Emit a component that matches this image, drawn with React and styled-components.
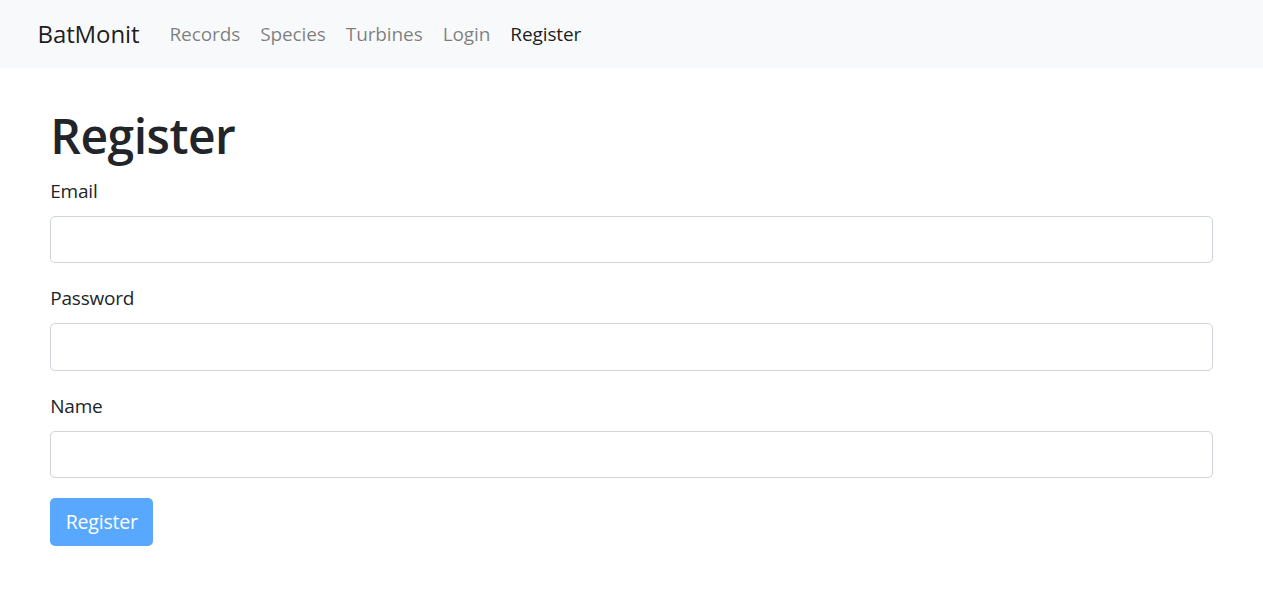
import React from "react";
import styled, { createGlobalStyle } from "styled-components";

const GlobalStyle = createGlobalStyle`
  * { box-sizing: border-box; }
  body {
    margin: 0;
    background: #ffffff;
    color: #212529;
    font-family: "Open Sans", "Noto Sans", sans-serif;
  }
`;

const NavBar = styled.nav`
  height: 68px;
  background: #f8f9fa;
  display: flex;
  align-items: center;
`;

const NavInner = styled.div`
  width: 100%;
  max-width: 1200px;
  margin: 0 auto;
  padding: 0 6px;
  display: flex;
  align-items: center;
`;

const Brand = styled.a`
  font-size: 24px;
  line-height: 36px;
  color: rgba(0, 0, 0, 0.9);
  margin-right: 20px;
  text-decoration: none;
  letter-spacing: -0.1px;
`;

const NavLink = styled.a`
  font-size: 19px;
  line-height: 30px;
  padding: 0 10px;
  color: ${(p) => (p.$active ? "rgba(0, 0, 0, 0.9)" : "rgba(0, 0, 0, 0.5)")};
  text-decoration: none;
  letter-spacing: -0.1px;
`;

const Container = styled.main`
  max-width: 1200px;
  margin: 0 auto;
  padding: 37.5px 18.75px 0;
`;

const Title = styled.h1`
  margin: 0 0 10px;
  font-size: 48px;
  line-height: 60px;
  font-weight: 600;
  letter-spacing: -0.5px;
`;

const FormGroup = styled.div`
  margin-bottom: 20px;
`;

const Label = styled.label`
  display: block;
  font-size: 19px;
  line-height: 30px;
  margin-bottom: 10px;
  letter-spacing: -0.2px;
`;

const Input = styled.input`
  display: block;
  width: 100%;
  height: 47.5px;
  border: 1px solid #ced4da;
  border-radius: 5px;
  padding: 7px 15px;
  font-size: 20px;
  font-family: inherit;
  background: #fff;
`;

const Button = styled.button`
  height: 47.5px;
  padding: 0 15.5px;
  border: none;
  border-radius: 5px;
  background: #007bff;
  opacity: 0.65;
  color: #fff;
  font-family: inherit;
  font-size: 19.5px;
  letter-spacing: -0.2px;
`;

const fields = ["Email", "Password", "Name"];

const App = () => (
  <>
    <GlobalStyle />
    <NavBar>
      <NavInner>
        <Brand>BatMonit</Brand>
        <NavLink>Records</NavLink>
        <NavLink>Species</NavLink>
        <NavLink>Turbines</NavLink>
        <NavLink>Login</NavLink>
        <NavLink $active>Register</NavLink>
      </NavInner>
    </NavBar>
    <Container>
      <Title>Register</Title>
      {fields.map((f) => (
        <FormGroup key={f}>
          <Label>{f}</Label>
          <Input type={f === "Password" ? "password" : "text"} />
        </FormGroup>
      ))}
      <Button disabled>Register</Button>
    </Container>
  </>
);

export default App;
